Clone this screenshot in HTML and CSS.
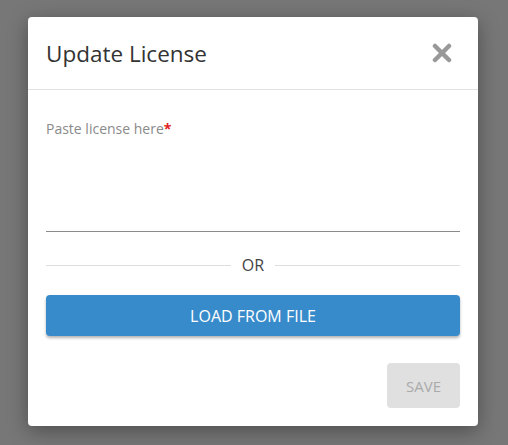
FILE: index.html
```html
<!DOCTYPE html>
<html lang="en">
<head>
<meta charset="UTF-8">
<title>Update License</title>
<link rel="stylesheet" href="styles.css">
</head>
<body>

<div class="modal">
    <div class="modal-header">
        <h2>Update License</h2>
        <span class="close">
            <svg width="20" height="20" viewBox="0 0 20 20"><path d="M3 3 L17 17 M17 3 L3 17" stroke="#999" stroke-width="4.5" stroke-linecap="round"/></svg>
        </span>
    </div>

    <div class="modal-body">
        <label for="license">Paste license here<span class="req">*</span></label>
        <textarea id="license"></textarea>

        <div class="divider"><span>OR</span></div>

        <button class="btn-load">LOAD FROM FILE</button>
    </div>

    <div class="modal-footer">
        <button class="btn-save" disabled>SAVE</button>
    </div>
</div>

</body>
</html>
```

FILE: styles.css
```css
html, body {
    height: 100%;
}
body {
    margin: 0;
    background: #777;
    font-family: "Open Sans", Arial, sans-serif;
    overflow: hidden;
}
.modal {
    margin: 17px 0 0 28px;
    width: 450px;
    height: 409px;
    background: white;
    border-radius: 4px;
    box-shadow: 0 5px 20px rgba(0,0,0,0.35);
    display: flex;
    flex-direction: column;
}
.modal-header {
    height: 72px;
    padding: 0 26px 0 18px;
    display: flex;
    justify-content: space-between;
    align-items: center;
    border-bottom: 1px solid #e2e2e2;
}
.modal-header h2 {
    margin: 0;
    font-size: 22.5px;
    font-weight: normal;
    color: #333;
}
.close {
    display: flex;
    cursor: pointer;
}
.modal-body {
    padding: 29px 18px 0 18px;
}
.modal-body label {
    display: block;
    font-size: 14px;
    color: #8a8a8a;
}
.req {
    color: #e02020;
    font-weight: bold;
}
.modal-body textarea {
    display: block;
    width: 100%;
    box-sizing: border-box;
    height: 90px;
    margin-top: 4px;
    border: none;
    border-bottom: 1px solid #8a8a8a;
    resize: none;
    outline: none;
    font-family: inherit;
}
.divider {
    display: flex;
    align-items: center;
    gap: 11px;
    margin-top: 22px;
    font-size: 16px;
    color: #444;
}
.divider::before, .divider::after {
    content: "";
    flex: 1;
    border-top: 1px solid #dedede;
}
.btn-load {
    display: block;
    width: 100%;
    height: 41px;
    margin-top: 19px;
    background: #388bca;
    color: white;
    border: none;
    border-radius: 4px;
    box-shadow: 0 2px 3px rgba(0,0,0,0.3);
    font-family: inherit;
    font-size: 16px;
    font-weight: 500;
    cursor: pointer;
}
.modal-footer {
    margin-top: auto;
    padding: 0 18px 18px;
    display: flex;
    justify-content: flex-end;
}
.btn-save {
    width: 73px;
    height: 45px;
    background: #e0e0e0;
    color: #aaa;
    border: none;
    border-radius: 4px;
    font-family: inherit;
    font-size: 15px;
}
```
